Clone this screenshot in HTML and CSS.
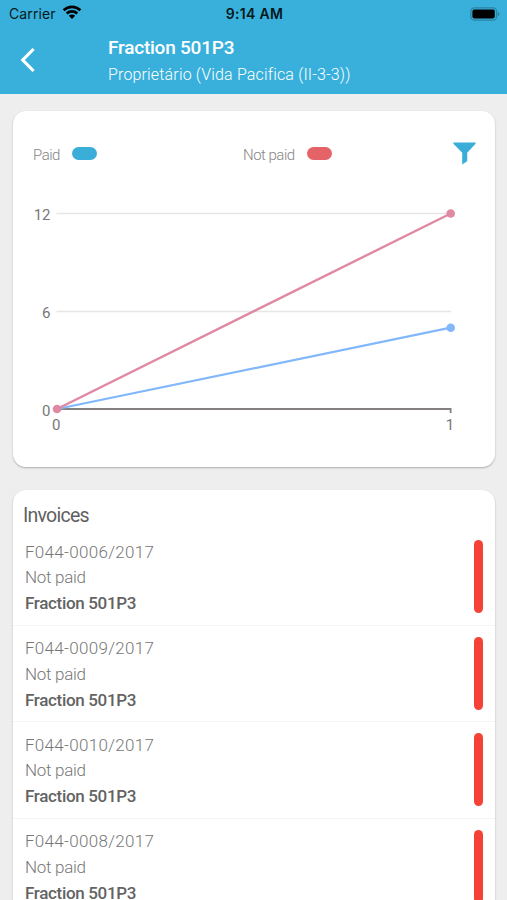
FILE: index.html
```html
<!DOCTYPE html>
<html lang="en">
<head>
<meta charset="utf-8">
<title>Fraction 501P3</title>
<link rel="stylesheet" href="styles.css">
</head>
<body>
<header class="header">
  <div class="status">
    <div class="carrier"><span class="carrier-name">Carrier</span>
      <svg class="wifi" width="20" height="15" viewBox="0 0 20 15" fill="none" stroke="#000" stroke-width="2.7"><path d="M1.6 5.3C6.4.7 13.6.7 18.4 5.3M4.7 8.5c3-2.8 7.6-2.8 10.6 0"/><path d="M10 14 6.8 10.8c1.8-1.6 4.6-1.6 6.4 0z" fill="#000" stroke="none"/></svg>
    </div>
    <span class="time">9:14 AM</span>
    <svg class="battery" width="30" height="14" viewBox="0 0 30 14"><rect x=".8" y=".8" width="25.8" height="12.4" rx="3.6" fill="none" stroke="#2b83a2" stroke-width="1.3"/><rect x="2.4" y="2.6" width="22.4" height="8.8" rx="1.8" fill="#000"/><path d="M27.8 4.8q1.8 1 1.8 2.2t-1.8 2.2z" fill="#2b83a2"/></svg>
  </div>
  <div class="nav">
    <svg class="back" width="16" height="26" viewBox="0 0 16 26" fill="none" stroke="#fff" stroke-width="3.2"><path d="M13.6 2 2.8 13l10.8 11"/></svg>
    <div class="titles">
      <h1 class="title">Fraction 501P3</h1>
      <p class="subtitle">Proprietário (Vida Pacifica (II-3-3))</p>
    </div>
  </div>
</header>
<main class="content">
  <section class="card chart-card">
    <div class="legend">
      <div class="key paid"><span class="key-label">Paid</span><i class="swatch blue"></i></div>
      <div class="key unpaid"><span class="key-label">Not paid</span><i class="swatch red"></i></div>
      <svg class="filter" width="23" height="23" viewBox="0 0 23 23" fill="#3aaed8"><path d="M.4.5h22.2v1.2L14.2 10.7v8.6L9.2 22.6V10.7L.4 1.7z"/></svg>
    </div>
    <svg class="chart" width="481" height="270" viewBox="0 0 481 270">
      <path d="M43.5 16.5H438M43.5 114.5H438" stroke="#e6e6e6" stroke-width="1.4"/>
      <path d="M44 212H437.6V216" fill="none" stroke="#848080" stroke-width="1.8"/>
      <path d="M44 212 437.7 130.7" stroke="#82b8fa" stroke-width="2.2"/>
      <circle cx="437.7" cy="130.7" r="4.3" fill="#82b8fa"/>
      <path d="M44 212 437.7 16.5" stroke="#df89a3" stroke-width="2.4"/>
      <circle cx="437.7" cy="16.5" r="4.3" fill="#df89a3"/>
      <circle cx="44" cy="212" r="4.3" fill="#df89a3"/>
      <g class="axis"><text x="37.5" y="23" text-anchor="end">12</text><text x="37.5" y="121" text-anchor="end">6</text><text x="37.5" y="218.6" text-anchor="end">0</text><text x="43.3" y="233" text-anchor="middle">0</text><text x="437" y="233" text-anchor="middle">1</text></g>
    </svg>
  </section>
  <section class="card invoices">
    <h2 class="heading">Invoices</h2>
    <ul class="list">
      <li class="row"><div class="info"><p class="number">F044-0006/2017</p><p class="state">Not paid</p><p class="fraction">Fraction 501P3</p></div><i class="bar"></i></li>
      <li class="row"><div class="info"><p class="number">F044-0009/2017</p><p class="state">Not paid</p><p class="fraction">Fraction 501P3</p></div><i class="bar"></i></li>
      <li class="row"><div class="info"><p class="number">F044-0010/2017</p><p class="state">Not paid</p><p class="fraction">Fraction 501P3</p></div><i class="bar"></i></li>
      <li class="row"><div class="info"><p class="number">F044-0008/2017</p><p class="state">Not paid</p><p class="fraction">Fraction 501P3</p></div><i class="bar"></i></li>
    </ul>
  </section>
</main>
</body>
</html>
```
FILE: styles.css
```css
* { box-sizing: border-box; margin: 0; padding: 0; }
body { width: 507px; height: 900px; overflow: hidden; background: #eee; color: #777; font-family: Roboto, "Liberation Sans", sans-serif; }
.header { height: 94px; background: #39b0db; color: #fff; }
.status { height: 27px; padding: 0 7px 0 9px; display: grid; grid-template-columns: 1fr auto 1fr; align-items: center; color: #071820; font-family: Inter, "Liberation Sans", sans-serif; }
.carrier { display: flex; align-items: center; gap: 6px; font-size: 14px; letter-spacing: .1px; }
.wifi { margin-top: -2px; }
.time { font-size: 14px; font-weight: 600; letter-spacing: .35px; }
.battery { justify-self: end; }
.nav { display: flex; height: 67px; padding-left: 20px; }
.back { margin-top: 20px; }
.titles { padding: 7px 0 0 72px; }
.title { font-size: 19px; line-height: 27px; font-weight: 500; letter-spacing: -.22px; white-space: nowrap; }
.subtitle { font-size: 16px; line-height: 27px; font-weight: 300; letter-spacing: .16px; white-space: nowrap; }
.content { height: 806px; overflow: hidden; padding: 17px 12.5px 0 13px; }
.card { background: #fff; border-radius: 13px; box-shadow: 0 1px 2px rgba(0,0,0,.28); }
.chart-card { height: 356px; margin-bottom: 23px; }
.legend { display: flex; align-items: center; height: 86px; padding: 0 19px 0 20px; }
.key { display: flex; align-items: center; gap: 12.5px; font-size: 15px; font-weight: 300; letter-spacing: -.5px; color: #858585; }
.key-label { padding-top: 1px; }
.paid { width: 210px; }
.swatch { width: 25px; height: 13px; margin-top: -1px; border-radius: 7px; }
.blue { background: #3aaed8; }
.red { background: #e46366; }
.filter { margin-left: auto; margin-top: -1px; }
.chart { display: block; }
.axis { font-size: 15px; fill: #777; }
.invoices { height: 410px; overflow: hidden; border-radius: 13px 13px 0 0; }
.heading { height: 39px; padding: 12px 0 0 10px; font-size: 19.5px; line-height: 27px; font-weight: 400; letter-spacing: -.75px; color: #606060; }
.list { list-style: none; }
.row { display: flex; justify-content: space-between; align-items: center; height: 96.5px; padding: 0 12px; border-bottom: 1px solid #f3f4f5; }
.info { padding-top: 3px; font-size: 17px; line-height: 25.8px; font-weight: 300; white-space: nowrap; }
.number { letter-spacing: .3px; }
.state { letter-spacing: -.3px; }
.fraction { font-weight: 500; letter-spacing: -.33px; color: #636363; }
.bar { width: 8.5px; height: 73px; border-radius: 5px; background: #f44336; }
```
